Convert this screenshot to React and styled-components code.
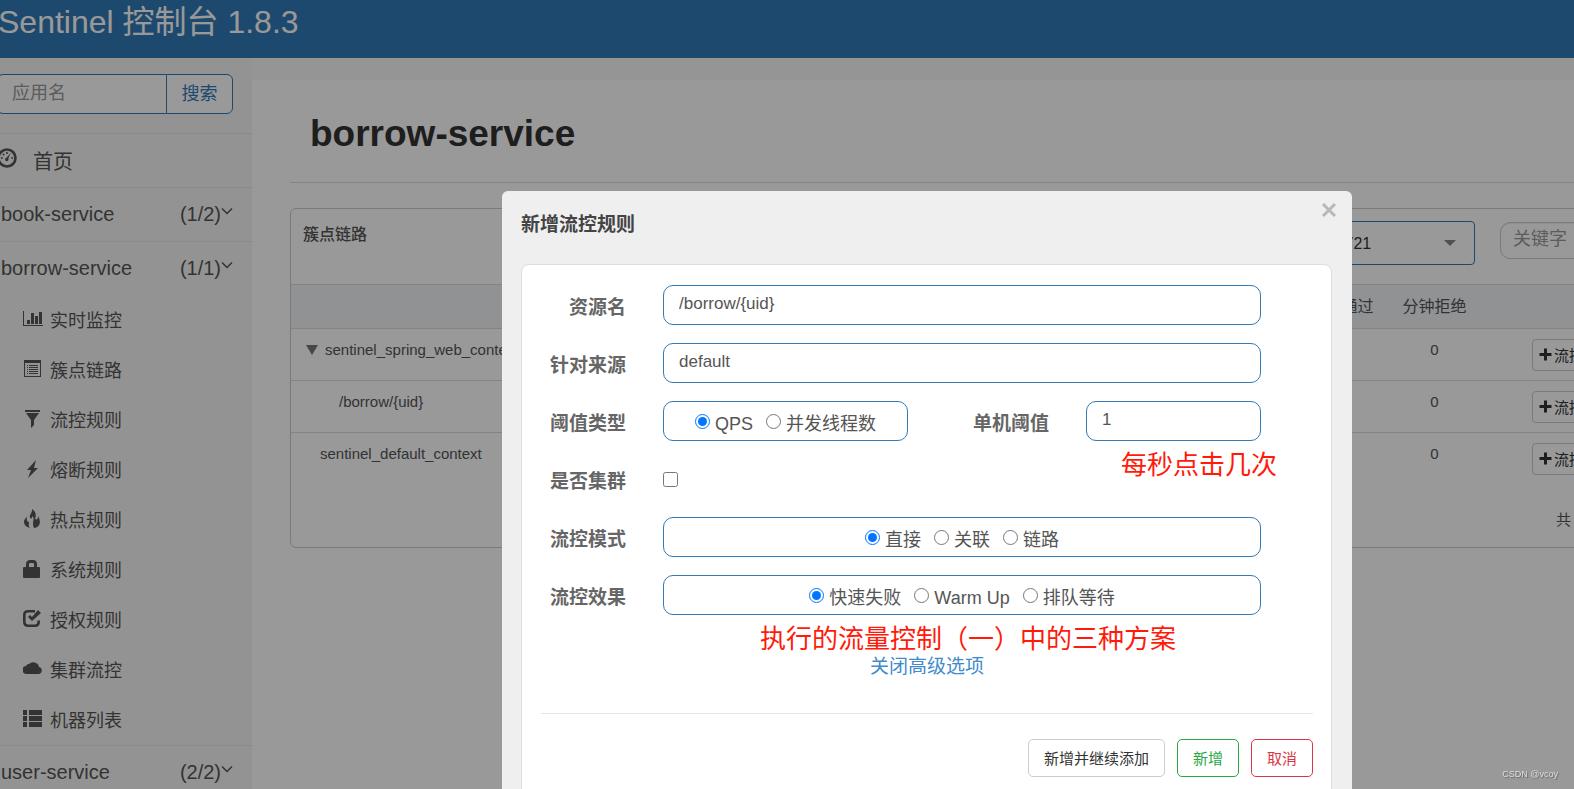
import React from "react";
import styled, { createGlobalStyle } from "styled-components";

const blue = "#337ab7";

const GlobalStyle = createGlobalStyle`
  *, *::before, *::after { box-sizing: border-box; }
  body {
    margin: 0;
    overflow: hidden;
    background: #fff;
    color: #555;
    font-family: "Liberation Sans", "Noto Sans CJK SC", sans-serif;
    font-size: 15px;
  }
  button, input, select { font-family: inherit; }
`;

const Page = styled.div`
  display: flex;
  flex-direction: column;
  height: 100vh;
  overflow: hidden;
`;

const Header = styled.header`
  flex: none;
  height: 58px;
  background: ${blue};
`;

const Brand = styled.h1`
  margin: 0;
  margin-left: -2px;
  font-size: 32px;
  font-weight: 400;
  line-height: 44px;
  color: #fff;
  white-space: nowrap;
`;

const Body = styled.div`
  flex: 1;
  display: flex;
  min-height: 0;
`;

const Sidebar = styled.aside`
  flex: none;
  width: 252px;
  background: #f6f6f6;
  overflow: hidden;
`;

const SearchForm = styled.form`
  display: flex;
  margin: 16px 19px 19px -3px;
`;

const SearchInput = styled.input`
  flex: 1;
  min-width: 0;
  height: 40px;
  padding: 0 14px 2px;
  border: 1px solid ${blue};
  border-right: 0;
  border-radius: 6px 0 0 6px;
  background: #fff;
  font-size: 18px;
  &::placeholder { color: #999; opacity: 1; }
`;

const SearchButton = styled.button`
  width: 67px;
  height: 40px;
  padding: 0 0 4px;
  border: 1px solid ${blue};
  border-radius: 0 6px 6px 0;
  background: #fff;
  color: ${blue};
  font-size: 18px;
`;

const NavGroup = styled.div`
  border-top: 1px solid #e7e7e7;
`;

const NavRow = styled.a`
  display: flex;
  align-items: center;
  height: 53px;
  padding: 0 19px 1px 1px;
  color: #555;
  font-size: 20px;
  text-decoration: none;
  svg { flex: none; }
`;

const NavName = styled.span`
  flex: 1;
  padding-left: ${(p) => (p.$icon ? "16px" : "0")};
`;

const HomeIcon = styled.span`
  display: flex;
  margin-left: -4px;
  padding-bottom: 4px;
`;

const Arrow = styled.span`
  display: flex;
  padding-bottom: 6px;
`;

const SubRow = styled.a`
  display: flex;
  align-items: center;
  gap: 7px;
  height: 50px;
  padding: 0 0 2px 23px;
  color: #555;
  font-size: 18px;
  text-decoration: none;
`;

const Main = styled.main`
  flex: 1;
  min-width: 0;
  overflow: hidden;
  border-top: 22px solid #f8f8f8;
`;

const PageWide = styled.div`
  margin-left: 38px;
  margin-right: -300px;
`;

const PageTitle = styled.h2`
  margin: 0 0 25px;
  padding: 26px 20px 21px;
  border-bottom: 1px solid #ddd;
  color: #333;
  font-size: 37px;
  line-height: 55px;
`;

const Panel = styled.section`
  height: 340px;
  border: 1px solid #ccc;
  border-radius: 6px;
  overflow: hidden;
`;

const PanelBar = styled.div`
  display: flex;
  align-items: flex-start;
  height: 75px;
  padding: 12px 193px 0 12px;
`;

const PanelTitle = styled.span`
  margin-right: auto;
  font-size: 16px;
  font-weight: 500;
  line-height: 28px;
`;

const SelectWrap = styled.div`
  display: flex;
  align-items: center;
  width: 268px;
  height: 44px;
  margin-right: 25px;
  padding-right: 18px;
  border: 1px solid ${blue};
  border-radius: 4px;
`;

const Machine = styled.select`
  flex: 1;
  height: 40px;
  padding: 0 12px;
  border: 0;
  background: transparent;
  appearance: none;
  color: #333;
  font-size: 16px;
`;

const Keyword = styled.input`
  width: 180px;
  height: 37px;
  margin-top: 1px;
  padding: 0 12px 2px;
  border: 1px solid #ccc;
  border-radius: 10px;
  box-shadow: inset 0 1px 1px rgba(0, 0, 0, 0.075);
  font-size: 18px;
  &::placeholder { color: #999; opacity: 1; }
`;

const Table = styled.table`
  width: 100%;
  table-layout: fixed;
  border-collapse: collapse;
`;

const Col = styled.col`
  width: ${(p) => (p.$w ? `${p.$w}px` : "auto")};
`;

const Th = styled.th`
  height: 44px;
  padding: 0 0 3px;
  border-top: 1px solid #ddd;
  background: #f0f3f7;
  font-size: 16px;
  font-weight: 400;
`;

const Td = styled.td`
  height: 52px;
  padding: 10px 0 0 ${(p) => p.$indent || 0}px;
  border-top: 1px solid #ddd;
  text-align: ${(p) => p.$align || "center"};
  vertical-align: top;
  line-height: 21px;
  white-space: nowrap;
`;

const Tree = styled.span`
  display: flex;
  align-items: center;
  gap: 7px;
`;

const Actions = styled.div`
  display: flex;
  gap: 5px;
`;

const RuleButton = styled.button`
  display: flex;
  align-items: center;
  gap: 2px;
  height: 32px;
  padding: 0 6px 2px;
  border: 1px solid #ccc;
  border-radius: 4px;
  background: #fff;
  color: #333;
  font-size: 15px;
`;

const Total = styled.div`
  padding: 24px 0 0 1265px;
  font-size: 15px;
  line-height: 22px;
`;

const Overlay = styled.div`
  position: fixed;
  inset: 0;
  display: flex;
  justify-content: center;
  align-items: flex-start;
  padding: 191px 0 0 280px;
  background: rgba(0, 0, 0, 0.4);
  overflow: hidden;
`;

const Dialog = styled.div`
  width: 850px;
  padding: 0 20px 20px 19px;
  border-radius: 6px;
  background: #efefef;
`;

const DialogHead = styled.div`
  display: flex;
  justify-content: space-between;
  align-items: flex-start;
  height: 73px;
`;

const DialogTitle = styled.h3`
  margin: 0;
  padding-top: 19px;
  color: #444;
  font-size: 19px;
  line-height: 30px;
`;

const Close = styled.button`
  display: flex;
  margin: 11px -5px 0 0;
  padding: 0;
  border: 0;
  background: transparent;
`;

const Card = styled.form`
  padding: 20px 18px 40px 19px;
  border: 1px solid #ddd;
  border-radius: 8px;
  background: #fff;
`;

const Fields = styled.div`
  display: flex;
  flex-direction: column;
  gap: 18px;
  margin-right: 52px;
`;

const Field = styled.div`
  position: relative;
  display: flex;
  align-items: center;
  height: 40px;
`;

const Label = styled.label`
  flex: none;
  width: ${(p) => p.$w || 85}px;
  margin-right: 37px;
  padding-top: 6px;
  color: #666;
  font-size: 19px;
  font-weight: 700;
  line-height: 28px;
  text-align: right;
`;

const TextInput = styled.input`
  flex: 1;
  min-width: 0;
  height: 40px;
  padding: 0 15px 3px;
  border: 1px solid ${blue};
  border-radius: 10px;
  background: #fff;
  color: #555;
  font-size: 17px;
`;

const RadioBox = styled.div`
  flex: ${(p) => (p.$w ? "none" : "1")};
  width: ${(p) => (p.$w ? `${p.$w}px` : "auto")};
  display: flex;
  justify-content: center;
  align-items: center;
  gap: 13px;
  height: 40px;
  border: 1px solid ${blue};
  border-radius: 10px;
`;

const Choice = styled.label`
  display: flex;
  align-items: center;
  gap: 5px;
  color: #555;
  font-size: 18px;
  line-height: 26px;
  white-space: nowrap;
  span { padding-top: 5px; }
`;

const Tick = styled.input`
  flex: none;
  width: 15px;
  height: 15px;
  margin: 0;
`;

const Note = styled.p`
  position: absolute;
  top: 45px;
  left: ${(p) => p.$left}px;
  margin: 0;
  color: #ff1a0a;
  font-size: 26px;
  font-weight: 400;
  line-height: 38px;
  white-space: nowrap;
`;

const MoreLine = styled.div`
  padding: 38px 0 32px;
  text-align: center;
  border-bottom: 1px solid #e5e5e5;
`;

const MoreLink = styled.a`
  color: #428bca;
  font-size: 19px;
  line-height: 28px;
  text-decoration: none;
`;

const Buttons = styled.div`
  display: flex;
  justify-content: flex-end;
  gap: 12px;
  padding-top: 25px;
`;

const Button = styled.button`
  height: 38px;
  padding: 0 15px 2px;
  border: 1px solid ${(p) => p.$line};
  border-radius: 5px;
  background: #fff;
  color: ${(p) => p.$color};
  font-size: 15px;
`;

const Watermark = styled.span`
  position: fixed;
  right: 16px;
  bottom: 8px;
  color: #ddd;
  font-size: 9px;
  line-height: 14px;
  text-shadow: 1px 1px 1px #666;
`;

const shapes = {
  stats: <path d="M0 2h1v14h19v1H0zM4 11h3v4H4zM8 4h3v11H8zM12 7h3v8h-3zM16 3h3v12h-3z" />,
  listAlt: (
    <path
      fillRule="evenodd"
      d="M1 1h17v17H1zM2 4v13h15V4zM4 6h1v1H4zM6 6h9v1H6zM4 8h1v1H4zM6 8h9v1H6zM4 10h1v1H4zM6 10h9v1H6zM4 12h1v1H4zM6 12h9v1H6zM4 14h1v1H4zM6 14h9v1H6z"
    />
  ),
  filter: <path d="M2 1h15v2H2zM3 4h13l-5 7v5l-3 3v-8z" />,
  flash: <path d="M13 1 4 11h4l-3 8 10-10h-4z" />,
  fire: (
    <path d="M9 0c1 3-3 5-2 9 1 1 3 0 2-2 3 2 1 5 1 7 0 2 0 3 1 5 7-1 7-7 4-12 0 3-1 4-3 3 2-5 0-8-3-10zM4 5c1 4-3 4-3 8 0 3 2 5 6 6-2-2-1-4-1-6-3 0-2-4-2-8z" />
  ),
  lock: (
    <path
      fillRule="evenodd"
      d="M3 8V5c0-3 2-4 4-4h3c3 0 4 2 4 4v3h2q1 0 1 1v9q0 1-1 1H1q-1 0-1-1V9q0-1 1-1zM6 8h5V5q0-1-1-1H7Q6 4 6 5z"
    />
  ),
  check: (
    <>
      <path
        fill="none"
        stroke="currentColor"
        strokeWidth="2.6"
        d="M12 2.300H5Q1.300 2.300 1.300 6v7Q1.300 16.700 5 16.700h7q3.700 0 3.700-3.700v-1.500"
      />
      <path d="m15 1 3 3-9 8-4-4 2-2 2 2z" />
    </>
  ),
  cloud: <path d="M4 15a4 4 0 0 1-1-8 3 3 0 0 1 3-2 6 6 0 0 1 10 3 3.600 3.600 0 0 1 0 7z" />,
  list: <path d="M0 1h4v5H0zM6 1h13v5H6zM0 7h4v5H0zM6 7h13v5H6zM0 13h4v5H0zM6 13h13v5H6z" />,
};

function Glyph({ name }) {
  return (
    <svg width="20" height="20" viewBox="0 0 20 20" fill="currentColor" aria-hidden="true">
      {shapes[name]}
    </svg>
  );
}

function Dashboard() {
  return (
    <svg width="20" height="20" viewBox="0 0 20 20" fill="currentColor" aria-hidden="true">
      <circle cx="10" cy="10" r="8.500" fill="none" stroke="currentColor" strokeWidth="2.600" />
      <circle cx="4.800" cy="10" r="1" />
      <circle cx="6.500" cy="6.500" r="1" />
      <circle cx="10" cy="5" r="1" />
      <circle cx="15.200" cy="10" r="1" />
      <path d="m13.800 4.800-2.500 5.800a1.700 1.700 0 1 1-1.800-.8z" />
    </svg>
  );
}

function Chevron() {
  return (
    <svg width="12" height="8" viewBox="0 0 12 8" aria-hidden="true">
      <path d="M1 1.500 6 6.500 11 1.500" fill="none" stroke="currentColor" strokeWidth="1.500" />
    </svg>
  );
}

function Triangle({ color = "currentColor", width = 12, height = 10 }) {
  return (
    <svg width={width} height={height} viewBox="0 0 12 10" preserveAspectRatio="none" fill={color} aria-hidden="true">
      <path d="M0 0h12L6 10z" />
    </svg>
  );
}

function Plus() {
  return (
    <svg width="13" height="13" viewBox="0 0 13 13" fill="currentColor" aria-hidden="true">
      <path d="M5 .5h3V5h4.500v3H8v4.500H5V8H.5V5H5z" />
    </svg>
  );
}

const menu = [
  ["stats", "实时监控"],
  ["listAlt", "簇点链路"],
  ["filter", "流控规则"],
  ["flash", "熔断规则"],
  ["fire", "热点规则"],
  ["lock", "系统规则"],
  ["check", "授权规则"],
  ["cloud", "集群流控"],
  ["list", "机器列表"],
];

const columns = ["通过QPS", "拒绝QPS", "并发数", "平均RT", "分钟通过", "分钟拒绝"];
const ruleKinds = ["流控", "熔断", "热点", "授权"];
const resources = [
  { name: "sentinel_spring_web_context", indent: 15, parent: true },
  { name: "/borrow/{uid}", indent: 48 },
  { name: "sentinel_default_context", indent: 29 },
];

function Service({ name, count, children }) {
  return (
    <NavGroup>
      <NavRow href="#">
        <NavName>{name}</NavName>
        <span>{count}</span>
        <Arrow>
          <Chevron />
        </Arrow>
      </NavRow>
      {children}
    </NavGroup>
  );
}

function Radios({ name, options, width, label }) {
  return (
    <RadioBox $w={width} role="radiogroup" aria-label={label}>
      {options.map((o, i) => (
        <Choice key={o}>
          <Tick type="radio" name={name} defaultChecked={i === 0} />
          <span>{o}</span>
        </Choice>
      ))}
    </RadioBox>
  );
}

export default function App() {
  return (
    <>
      <GlobalStyle />
      <Page>
        <Header>
          <Brand>Sentinel 控制台 1.8.3</Brand>
        </Header>
        <Body>
          <Sidebar>
            <SearchForm>
              <SearchInput placeholder="应用名" aria-label="应用名" />
              <SearchButton type="button">搜索</SearchButton>
            </SearchForm>
            <NavGroup>
              <NavRow href="#">
                <HomeIcon>
                  <Dashboard />
                </HomeIcon>
                <NavName $icon>首页</NavName>
              </NavRow>
            </NavGroup>
            <Service name="book-service" count="(1/2)" />
            <Service name="borrow-service" count="(1/1)">
              {menu.map(([icon, text]) => (
                <SubRow href="#" key={text}>
                  <Glyph name={icon} />
                  {text}
                </SubRow>
              ))}
            </Service>
            <Service name="user-service" count="(2/2)" />
          </Sidebar>
          <Main>
            <PageWide>
              <PageTitle>borrow-service</PageTitle>
              <Panel>
                <PanelBar>
                  <PanelTitle>簇点链路</PanelTitle>
                  <SelectWrap>
                    <Machine aria-label="机器">
                      <option>192.168.43.235:8721</option>
                    </Machine>
                    <Triangle color="#888" width={12} height={6} />
                  </SelectWrap>
                  <Keyword placeholder="关键字" aria-label="关键字" />
                </PanelBar>
                <Table>
                  <colgroup>
                    <Col />
                    {columns.map((c) => (
                      <Col key={c} $w={93} />
                    ))}
                    <Col $w={392} />
                  </colgroup>
                  <thead>
                    <tr>
                      <Th />
                      {columns.map((c) => (
                        <Th key={c}>{c}</Th>
                      ))}
                      <Th>操作</Th>
                    </tr>
                  </thead>
                  <tbody>
                    {resources.map((r) => (
                      <tr key={r.name}>
                        <Td $align="left" $indent={r.indent}>
                          <Tree>
                            {r.parent && <Triangle color="#777" />}
                            {r.name}
                          </Tree>
                        </Td>
                        {columns.map((c) => (
                          <Td key={c}>0</Td>
                        ))}
                        <Td $align="left" $indent={51}>
                          <Actions>
                            {ruleKinds.map((k) => (
                              <RuleButton type="button" key={k}>
                                <Plus />
                                {k}
                              </RuleButton>
                            ))}
                          </Actions>
                        </Td>
                      </tr>
                    ))}
                  </tbody>
                </Table>
                <Total>共 3 条记录</Total>
              </Panel>
            </PageWide>
          </Main>
        </Body>
      </Page>
      <Overlay>
        <Dialog role="dialog" aria-label="新增流控规则">
          <DialogHead>
            <DialogTitle>新增流控规则</DialogTitle>
            <Close type="button" aria-label="关闭">
              <svg width="16" height="16" viewBox="0 0 16 16" aria-hidden="true">
                <path d="m2 2 12 12M14 2 2 14" stroke="#b8b8b8" strokeWidth="3" />
              </svg>
            </Close>
          </DialogHead>
          <Card>
            <Fields>
              <Field>
                <Label htmlFor="resource">资源名</Label>
                <TextInput id="resource" defaultValue="/borrow/{uid}" />
              </Field>
              <Field>
                <Label htmlFor="origin">针对来源</Label>
                <TextInput id="origin" defaultValue="default" />
              </Field>
              <Field>
                <Label as="span">阈值类型</Label>
                <Radios name="grade" label="阈值类型" width={245} options={["QPS", "并发线程数"]} />
                <Label htmlFor="count" $w={141}>
                  单机阈值
                </Label>
                <TextInput id="count" defaultValue="1" />
                <Note $left={580}>每秒点击几次</Note>
              </Field>
              <Field>
                <Label htmlFor="cluster">是否集群</Label>
                <Tick id="cluster" type="checkbox" />
              </Field>
              <Field>
                <Label as="span">流控模式</Label>
                <Radios name="mode" label="流控模式" options={["直接", "关联", "链路"]} />
              </Field>
              <Field>
                <Label as="span">流控效果</Label>
                <Radios name="effect" label="流控效果" options={["快速失败", "Warm Up", "排队等待"]} />
                <Note $left={219}>执行的流量控制（一）中的三种方案</Note>
              </Field>
            </Fields>
            <MoreLine>
              <MoreLink href="#">关闭高级选项</MoreLink>
            </MoreLine>
            <Buttons>
              <Button type="button" $line="#ccc" $color="#333">
                新增并继续添加
              </Button>
              <Button type="button" $line="#28a745" $color="#28a745">
                新增
              </Button>
              <Button type="button" $line="#dc3545" $color="#dc3545">
                取消
              </Button>
            </Buttons>
          </Card>
        </Dialog>
      </Overlay>
      <Watermark>CSDN @vcoy</Watermark>
    </>
  );
}
